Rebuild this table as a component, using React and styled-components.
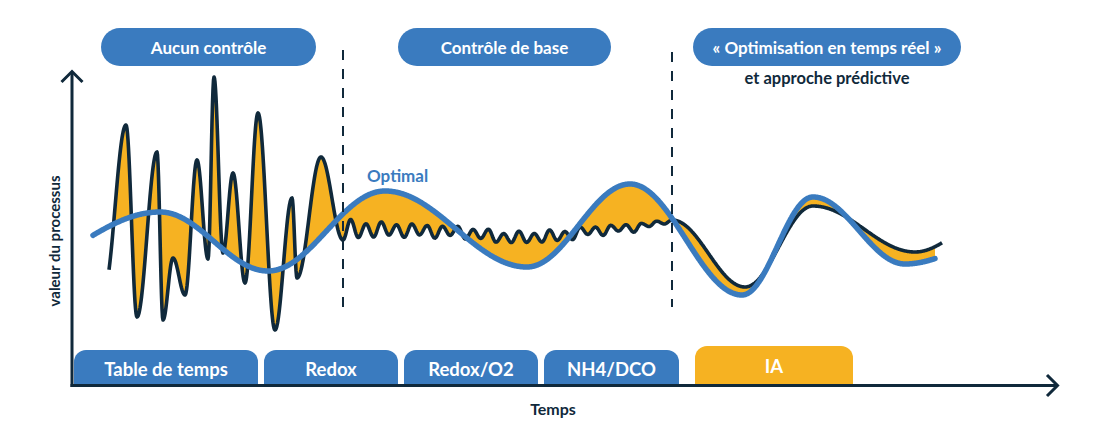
import React from "react";
import styled, { createGlobalStyle } from "styled-components";

const NAVY = "#10293b";
const BLUE = "#3a7bbf";
const YELLOW = "#f6b222";

const GlobalStyle = createGlobalStyle`
  body {
    margin: 0;
    background: #ffffff;
    font-family: Lato, "Open Sans", sans-serif;
  }
`;

const Stage = styled.div`
  position: relative;
  width: 1107px;
  height: 440px;
  box-sizing: border-box;
  padding: 28px 0 56px;
  display: flex;
  flex-direction: column;
  justify-content: space-between;
  overflow: hidden;
  background: #ffffff;
`;

const Chart = styled.svg`
  position: absolute;
  left: 0;
  top: 0;
`;

const PhaseRow = styled.div`
  position: relative;
  display: flex;
  align-items: flex-start;
  gap: 82px;
  padding-left: 101px;
`;

const Phase = styled.div`
  display: flex;
  flex-direction: column;
  align-items: center;
  gap: 2px;
  width: ${props => props.$width}px;
`;

const Pill = styled.div`
  width: 100%;
  height: 38px;
  border-radius: 19px;
  background: ${BLUE};
  color: #ffffff;
  display: flex;
  align-items: center;
  justify-content: center;
  font-size: 17px;
  font-weight: 700;
`;

const Note = styled.div`
  font-size: 16.5px;
  line-height: 20px;
  font-weight: 700;
  color: ${NAVY};
`;

const TabRow = styled.div`
  position: relative;
  display: flex;
  align-items: flex-end;
  gap: 6px;
  padding-left: 74px;
`;

const Tab = styled.div`
  width: ${props => props.$width}px;
  height: ${props => (props.$accent ? 38 : 34)}px;
  margin-left: ${props => (props.$accent ? 10 : 0)}px;
  box-sizing: border-box;
  padding-top: ${props => (props.$accent ? 1 : 3)}px;
  border-radius: 12px 12px 0 0;
  background: ${props => (props.$accent ? YELLOW : BLUE)};
  color: #ffffff;
  display: flex;
  align-items: center;
  justify-content: center;
  font-size: 18.5px;
  font-weight: 700;
`;

// cosine interpolation between extrema
const interp = (pts, x) => {
  for (let i = 0; i < pts.length - 1; i++) {
    const [x0, y0] = pts[i];
    const [x1, y1] = pts[i + 1];
    if (x >= x0 && x <= x1) {
      const t = (x - x0) / (x1 - x0);
      return y0 + ((y1 - y0) * (1 - Math.cos(Math.PI * t))) / 2;
    }
  }
  return pts[pts.length - 1][1];
};

const linear = (table, x) => {
  for (let i = 0; i < table.length - 1; i++) {
    const [x0, y0] = table[i];
    const [x1, y1] = table[i + 1];
    if (x >= x0 && x <= x1) return y0 + ((y1 - y0) * (x - x0)) / (x1 - x0);
  }
  return table[table.length - 1][1];
};

const sample = (pts, from, to, step = 0.5) => {
  const out = [];
  for (let x = from; x <= to + 1e-6; x += step) out.push([x, interp(pts, x)]);
  return out;
};

const toPath = arr =>
  arr.map(([x, y], i) => `${i ? "L" : "M"}${x.toFixed(1)} ${y.toFixed(1)}`).join("");

const optimalPts = [
  [5, 271], [160, 212], [268, 271], [385, 191], [527, 267],
  [630, 184], [742, 295], [813, 197], [905, 264], [1000, 240],
];

const noisyPts = [
  [104, 290], [126, 125], [137, 317], [157, 152], [163, 320], [173, 258],
  [185, 295], [197, 160], [208, 259], [214, 77], [223, 253], [233, 173],
  [245, 283], [258, 113], [275, 330], [292, 198], [297, 278], [321, 157],
];

const BASE = [[343, 229], [400, 230], [460, 232], [510, 238], [560, 236], [590, 231], [630, 228], [672, 221]];
const AMP = [[343, 11], [365, 7], [400, 6], [460, 5], [560, 5], [600, 4], [650, 3], [672, 1]];

const steps = 43;
const half = (672 - 343) / steps;
for (let i = 0; i <= steps; i++) {
  const x = 343 + i * half;
  const sign = i % 2 === 0 ? 1 : -1;
  // a little irregularity, as hand-drawn noise
  const jitter = Math.sin(i * 1.7) * 1.5;
  noisyPts.push([x, linear(BASE, x) + sign * (linear(AMP, x) + (i > 2 && i < steps - 2 ? jitter : 0))]);
}
noisyPts.push([745, 287], [813, 206], [915, 252], [990, 220]);

const optimalLine = sample(optimalPts, 93, 935);
const noisyLine = sample(noisyPts, 109, 942);
const fillPath =
  toPath(sample(noisyPts, 113.5, 935)) +
  toPath(sample(optimalPts, 113.5, 935).reverse()).replace("M", "L") +
  "Z";

const phases = [
  { label: "Aucun contrôle", width: 215 },
  { label: "Contrôle de base", width: 213 },
  { label: "« Optimisation en temps réel »", width: 268, note: "et approche prédictive" },
];

const tabs = [
  { label: "Table de temps", width: 184 },
  { label: "Redox", width: 134 },
  { label: "Redox/O2", width: 134 },
  { label: "NH4/DCO", width: 135 },
  { label: "IA", width: 158, accent: true },
];

export default function App() {
  return (
    <>
      <GlobalStyle />
      <Stage>
        <Chart width="1107" height="440" viewBox="0 0 1107 440">
          <path d={fillPath} fill={YELLOW} stroke="none" />
          <path d={toPath(noisyLine)} fill="none" stroke={NAVY} strokeWidth="3.6" strokeLinejoin="round" />
          <path d={toPath(optimalLine)} fill="none" stroke={BLUE} strokeWidth="5.5" strokeLinecap="round" strokeLinejoin="round" />

          <line x1="343" y1="50" x2="343" y2="307" stroke={NAVY} strokeWidth="2" strokeDasharray="10 9" />
          <line x1="672" y1="52" x2="672" y2="307" stroke={NAVY} strokeWidth="2" strokeDasharray="10 9" />

          <line x1="72" y1="73" x2="72" y2="387" stroke={NAVY} strokeWidth="3" />
          <polyline points="61.5,82 72,71.5 82.5,82" fill="none" stroke={NAVY} strokeWidth="3" />
          <line x1="70.5" y1="385.5" x2="1057" y2="385.5" stroke={NAVY} strokeWidth="3" />
          <polyline points="1047,375 1057.5,385.5 1047,396" fill="none" stroke={NAVY} strokeWidth="3" />

          <text x="367" y="182" fill={BLUE} fontSize="17" fontWeight="700" fontFamily="Lato, sans-serif">
            Optimal
          </text>
          <text x="553" y="415" fill={NAVY} fontSize="16" fontWeight="700" textAnchor="middle" fontFamily="Lato, sans-serif">
            Temps
          </text>
          <text
            transform="translate(60 241) rotate(-90)"
            fill={NAVY}
            fontSize="15"
            fontWeight="700"
            textAnchor="middle"
            fontFamily="Lato, sans-serif"
          >
            valeur du processus
          </text>
        </Chart>

        <PhaseRow>
          {phases.map(phase => (
            <Phase key={phase.label} $width={phase.width}>
              <Pill>{phase.label}</Pill>
              {phase.note && <Note>{phase.note}</Note>}
            </Phase>
          ))}
        </PhaseRow>

        <TabRow>
          {tabs.map(tab => (
            <Tab key={tab.label} $width={tab.width} $accent={tab.accent}>
              {tab.label}
            </Tab>
          ))}
        </TabRow>
      </Stage>
    </>
  );
}
